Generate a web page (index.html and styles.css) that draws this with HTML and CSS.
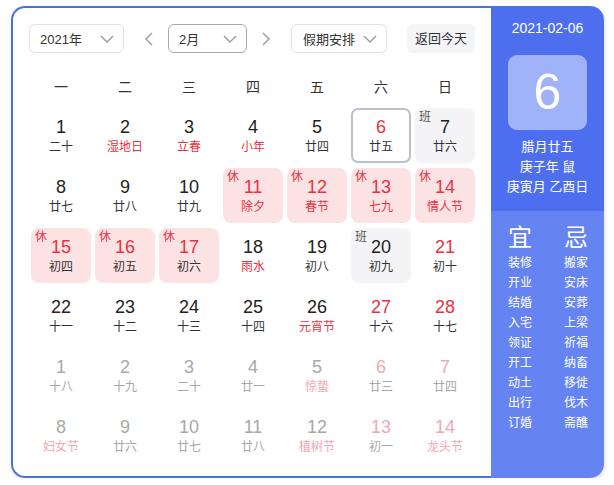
FILE: index.html
```html
<!DOCTYPE html>
<html lang="zh">
<head>
<meta charset="utf-8">
<link rel="stylesheet" href="styles.css">
</head>
<body>
<div class="cal">
  <div class="main">
    <div class="toolbar">
      <div class="select sel-year"><span>2021年</span><svg class="chev" viewBox="0 0 14 8"><path d="M1 1 L7 7 L13 1"/></svg></div>
      <div class="arrow"><svg viewBox="0 0 8 14"><path d="M7 1 L1 7 L7 13"/></svg></div>
      <div class="select sel-month"><span>2月</span><svg class="chev" viewBox="0 0 14 8"><path d="M1 1 L7 7 L13 1"/></svg></div>
      <div class="arrow arrow-next"><svg viewBox="0 0 8 14"><path d="M1 1 L7 7 L1 13"/></svg></div>
      <div class="select sel-holiday"><span>假期安排</span><svg class="chev" viewBox="0 0 14 8"><path d="M1 1 L7 7 L13 1"/></svg></div>
      <div class="today-btn">返回今天</div>
    </div>
    <div class="weekdays">
      <div>一</div><div>二</div><div>三</div><div>四</div><div>五</div><div>六</div><div>日</div>
    </div>
    <div class="grid">
      <div class="cell"><div class="num">1</div><div class="lun">二十</div></div>
      <div class="cell"><div class="num">2</div><div class="lun red">湿地日</div></div>
      <div class="cell"><div class="num">3</div><div class="lun red">立春</div></div>
      <div class="cell"><div class="num">4</div><div class="lun red">小年</div></div>
      <div class="cell"><div class="num">5</div><div class="lun">廿四</div></div>
      <div class="cell selected"><div class="num red">6</div><div class="lun">廿五</div></div>
      <div class="cell work"><span class="tag">班</span><div class="num">7</div><div class="lun">廿六</div></div>

      <div class="cell"><div class="num">8</div><div class="lun">廿七</div></div>
      <div class="cell"><div class="num">9</div><div class="lun">廿八</div></div>
      <div class="cell"><div class="num">10</div><div class="lun">廿九</div></div>
      <div class="cell rest"><span class="tag">休</span><div class="num red">11</div><div class="lun red">除夕</div></div>
      <div class="cell rest"><span class="tag">休</span><div class="num red">12</div><div class="lun red">春节</div></div>
      <div class="cell rest"><span class="tag">休</span><div class="num red">13</div><div class="lun red">七九</div></div>
      <div class="cell rest"><span class="tag">休</span><div class="num red">14</div><div class="lun red">情人节</div></div>

      <div class="cell rest"><span class="tag">休</span><div class="num red">15</div><div class="lun">初四</div></div>
      <div class="cell rest"><span class="tag">休</span><div class="num red">16</div><div class="lun">初五</div></div>
      <div class="cell rest"><span class="tag">休</span><div class="num red">17</div><div class="lun">初六</div></div>
      <div class="cell"><div class="num">18</div><div class="lun red">雨水</div></div>
      <div class="cell"><div class="num">19</div><div class="lun">初八</div></div>
      <div class="cell work"><span class="tag">班</span><div class="num">20</div><div class="lun">初九</div></div>
      <div class="cell"><div class="num red">21</div><div class="lun">初十</div></div>

      <div class="cell"><div class="num">22</div><div class="lun">十一</div></div>
      <div class="cell"><div class="num">23</div><div class="lun">十二</div></div>
      <div class="cell"><div class="num">24</div><div class="lun">十三</div></div>
      <div class="cell"><div class="num">25</div><div class="lun">十四</div></div>
      <div class="cell"><div class="num">26</div><div class="lun red">元宵节</div></div>
      <div class="cell"><div class="num red">27</div><div class="lun">十六</div></div>
      <div class="cell"><div class="num red">28</div><div class="lun">十七</div></div>

      <div class="cell other"><div class="num">1</div><div class="lun">十八</div></div>
      <div class="cell other"><div class="num">2</div><div class="lun">十九</div></div>
      <div class="cell other"><div class="num">3</div><div class="lun">二十</div></div>
      <div class="cell other"><div class="num">4</div><div class="lun">廿一</div></div>
      <div class="cell other"><div class="num">5</div><div class="lun red">惊蛰</div></div>
      <div class="cell other"><div class="num red">6</div><div class="lun">廿三</div></div>
      <div class="cell other"><div class="num red">7</div><div class="lun">廿四</div></div>

      <div class="cell other"><div class="num">8</div><div class="lun red">妇女节</div></div>
      <div class="cell other"><div class="num">9</div><div class="lun">廿六</div></div>
      <div class="cell other"><div class="num">10</div><div class="lun">廿七</div></div>
      <div class="cell other"><div class="num">11</div><div class="lun">廿八</div></div>
      <div class="cell other"><div class="num">12</div><div class="lun red">植树节</div></div>
      <div class="cell other"><div class="num red">13</div><div class="lun">初一</div></div>
      <div class="cell other"><div class="num red">14</div><div class="lun red">龙头节</div></div>
    </div>
  </div>
  <div class="side">
    <div class="side-top">
      <div class="date">2021-02-06</div>
      <div class="big">6</div>
      <div class="lunar-info">
        <div>腊月廿五</div>
        <div>庚子年 鼠</div>
        <div>庚寅月 乙酉日</div>
      </div>
    </div>
    <div class="side-bottom">
      <div class="yj">
        <div class="yj-col">
          <div class="yj-head">宜</div>
          <div>装修</div><div>开业</div><div>结婚</div><div>入宅</div><div>领证</div><div>开工</div><div>动土</div><div>出行</div><div>订婚</div>
        </div>
        <div class="yj-col">
          <div class="yj-head">忌</div>
          <div>搬家</div><div>安床</div><div>安葬</div><div>上梁</div><div>祈福</div><div>纳畜</div><div>移徙</div><div>伐木</div><div>斋醮</div>
        </div>
      </div>
    </div>
  </div>
</div>
</body>
</html>
```

FILE: styles.css
```css
* { box-sizing: border-box; }
html, body { margin: 0; padding: 0; background: #fff; }
body {
  font-family: "Liberation Sans", Arial, "Noto Sans CJK SC", sans-serif;
  color: #333;
}
.cal {
  display: flex;
  margin: 6px 0 0 11px;
  width: 593px;
  height: 472px;
  border-radius: 14px;
  box-shadow: 1px 2px 4px rgba(0, 0, 0, 0.12);
}
.main {
  width: 480px;
  height: 472px;
  border: 2px solid #4c72d6;
  border-right: 0;
  border-radius: 14px 0 0 14px;
  padding: 16px 16px 0 16px;
  background: #fff;
}
.toolbar {
  display: flex;
  align-items: center;
  height: 29px;
  font-size: 13px;
  color: #333;
}
.select {
  height: 29px;
  display: flex;
  align-items: center;
  justify-content: space-between;
  border: 1px solid #e2e2e2;
  border-radius: 6px;
  padding: 0 9px 0 10px;
}
.sel-year { width: 95px; }
.sel-month { width: 79px; border-color: #a8a8a8; }
.sel-holiday { width: 96px; padding-left: 11px; }
.chev { width: 14px; height: 8px; }
.chev path, .arrow path {
  fill: none;
  stroke: #9a9a9a;
  stroke-width: 1.4;
}
.arrow {
  width: 20px;
  height: 29px;
  display: flex;
  align-items: center;
  justify-content: center;
  margin: 0 9px 0 15px;
}
.arrow-next { margin: 0 15px 0 9px; }
.arrow svg { width: 8px; height: 14px; }
.today-btn {
  margin-left: auto;
  width: 68px;
  height: 29px;
  line-height: 29px;
  text-align: center;
  background: #f4f5f6;
  border-radius: 6px;
}
.weekdays {
  display: grid;
  grid-template-columns: repeat(7, 60px);
  column-gap: 4px;
  margin: 22px 0 0 2px;
  height: 24px;
  line-height: 24px;
  font-size: 14px;
  text-align: center;
  color: #333;
}
.grid {
  display: grid;
  grid-template-columns: repeat(7, 60px);
  grid-auto-rows: 55px;
  gap: 5px 4px;
  margin: 9px 0 0 2px;
}
.cell {
  position: relative;
  border-radius: 8px;
  text-align: center;
  padding-top: 8px;
}
.num {
  font-size: 18px;
  line-height: 22px;
  color: #222;
}
.lun {
  font-size: 12px;
  line-height: 18px;
  color: #333;
}
.red { color: #e8323f; }
.num.red { color: #e8323f; }
.rest { background: #fde2e4; }
.work { background: #f4f4f6; }
.selected {
  border: 2px solid #bcc0c8;
  padding-top: 6px;
  border-radius: 7px;
}
.tag {
  position: absolute;
  top: 2px;
  left: 4px;
  font-size: 12px;
  line-height: 14px;
  color: #555;
}
.rest .tag { color: #e8323f; }
.other .num { color: #a8a8a8; }
.other .lun { color: #a8a8a8; }
.other .num.red, .other .lun.red { color: #f2a7ae; }
.side {
  width: 113px;
  height: 472px;
  border-radius: 0 14px 14px 0;
  overflow: hidden;
  color: #fff;
  display: flex;
  flex-direction: column;
}
.side-top {
  height: 205px;
  background: #4e6ef0;
  padding-top: 13px;
  text-align: center;
}
.date {
  font-size: 14px;
  line-height: 18px;
}
.big {
  width: 79px;
  height: 75px;
  margin: 18px auto 0;
  background: #a0b2f8;
  border-radius: 9px;
  font-size: 50px;
  line-height: 75px;
  text-align: center;
  color: #fff;
}
.lunar-info {
  margin-top: 7px;
  font-size: 13px;
  line-height: 20px;
}
.side-bottom {
  flex: 1;
  background: #6584f2;
  padding: 12px 0 0 8px;
}
.yj {
  display: flex;
  gap: 14px;
}
.yj-col {
  width: 42px;
  text-align: center;
  font-size: 12px;
  line-height: 20px;
}
.yj-col .yj-head {
  font-size: 24px;
  line-height: 30px;
}
```
